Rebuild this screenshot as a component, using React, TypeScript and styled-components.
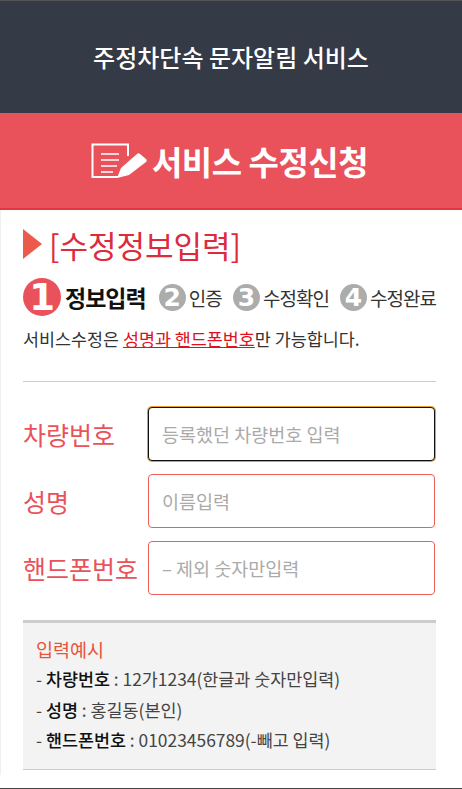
import styled, { createGlobalStyle } from 'styled-components';

const FONT = `"Noto Sans CJK KR", "Noto Sans", sans-serif`;

const STEPS = [
  { number: '2', label: '인증' },
  { number: '3', label: '수정확인' },
  { number: '4', label: '수정완료' },
];

const FIELDS = [
  { label: '차량번호', placeholder: '등록했던 차량번호 입력', focused: true },
  { label: '성명', placeholder: '이름입력', focused: false },
  { label: '핸드폰번호', placeholder: '– 제외 숫자만입력', focused: false },
];

export default function App() {
  return (
    <>
      <GlobalStyle />
      <Page>
        <TopBar>주정차단속 문자알림 서비스</TopBar>
        <Banner>
          <svg width="56" height="36" viewBox="0 0 56 36" aria-hidden="true">
            <path d="M27 34H1.5V1.5H37V13" fill="none" stroke="#fff" strokeWidth="2" />
            <path d="M10 11h18M10 17h18M10 23h16M10 29h12" stroke="#fff" strokeWidth="1.3" />
            <path d="M26 35l4-10L46 11c1-1 2-1 3 0l6 5c1 1 1 2 0 3L38 32z" fill="#fff" />
          </svg>
          <BannerTitle>서비스 수정신청</BannerTitle>
        </Banner>
        <Content>
          <SectionTitle>
            <Arrow />
            <span>[수정정보입력]</span>
          </SectionTitle>
          <Steps>
            <ActiveStep>
              <ActiveNumber>1</ActiveNumber>
              <ActiveLabel>정보입력</ActiveLabel>
            </ActiveStep>
            {STEPS.map((step) => (
              <Step key={step.number}>
                <StepNumber>{step.number}</StepNumber>
                <StepLabel>{step.label}</StepLabel>
              </Step>
            ))}
          </Steps>
          <Notice>
            서비스수정은 <NoticeLink>성명과 핸드폰번호</NoticeLink>만 가능합니다.
          </Notice>
          <Divider />
          <Form>
            {FIELDS.map((field) => (
              <FieldRow key={field.label}>
                <FieldLabel>{field.label}</FieldLabel>
                <FieldInput $focused={field.focused} placeholder={field.placeholder} />
              </FieldRow>
            ))}
          </Form>
          <ExampleBox>
            <ExampleTitle>입력예시</ExampleTitle>
            <ExampleLine>
              - <strong>차량번호</strong> : 12가1234(한글과 숫자만입력)
            </ExampleLine>
            <ExampleLine>
              - <strong>성명</strong> : 홍길동(본인)
            </ExampleLine>
            <ExampleLine>
              - <strong>핸드폰번호</strong> : 01023456789(-빼고 입력)
            </ExampleLine>
          </ExampleBox>
        </Content>
      </Page>
    </>
  );
}

const GlobalStyle = createGlobalStyle`
  html, body {
    margin: 0;
    padding: 0;
    background: #fff;
  }

  * {
    box-sizing: border-box;
  }
`;

const Page = styled.div`
  width: 462px;
  height: 789px;
  overflow: hidden;
  font-family: ${FONT};
  border-top: 1px solid #555;
  border-bottom: 1px solid #444;
  display: flex;
  flex-direction: column;
`;

const TopBar = styled.header`
  height: 112px;
  flex: none;
  padding-bottom: 2px;
  background: #343a46;
  color: #fff;
  font-size: 24px;
  font-weight: 500;
  display: flex;
  align-items: center;
  justify-content: center;
`;

const Banner = styled.div`
  height: 97px;
  flex: none;
  background: #e9525b;
  border-bottom: 2px solid #e0363d;
  color: #fff;
  display: flex;
  align-items: center;
  justify-content: center;
  gap: 5px;
  padding-right: 3px;
`;

const BannerTitle = styled.h1`
  margin: 0;
  font-size: 33px;
  font-weight: 700;
  letter-spacing: -0.5px;
`;

const Content = styled.main`
  height: 565px;
  flex: none;
  padding: 14px 26px 0 22px;
  border-left: 1px solid #f0f0f0;
`;

const SectionTitle = styled.h2`
  margin: 0;
  height: 40px;
  display: flex;
  align-items: center;
  gap: 7px;
  font-size: 31px;
  font-weight: 400;
  color: #dc2b3c;
`;

const Arrow = styled.i`
  width: 0;
  height: 0;
  border-style: solid;
  border-width: 15px 0 15px 19px;
  border-color: transparent transparent transparent #ec5a4c;
`;

const Steps = styled.div`
  margin-top: 13px;
  height: 40px;
  display: flex;
  align-items: center;
  justify-content: space-between;
`;

const ActiveStep = styled.div`
  display: flex;
  align-items: center;
  gap: 4px;
  margin-right: 2px;
`;

const Step = styled.div`
  display: flex;
  align-items: center;
  gap: 3px;
`;

const ActiveNumber = styled.span`
  width: 38px;
  height: 38px;
  border-radius: 50%;
  background: #e9525b;
  color: #fff;
  font-family: "DejaVu Sans", sans-serif;
  font-size: 37px;
  font-weight: 700;
  display: flex;
  align-items: center;
  justify-content: center;
`;

const ActiveLabel = styled.span`
  font-size: 23px;
  font-weight: 700;
  letter-spacing: -1px;
  color: #111;
`;

const StepNumber = styled.span`
  width: 27px;
  height: 27px;
  border-radius: 50%;
  background: #acacac;
  color: #fff;
  font-family: "DejaVu Sans", sans-serif;
  font-size: 25px;
  font-weight: 700;
  display: flex;
  align-items: center;
  justify-content: center;
`;

const StepLabel = styled.span`
  font-size: 19px;
  letter-spacing: -1px;
  color: #333;
`;

const Notice = styled.p`
  margin: 5px 0 0;
  font-size: 17.4px;
  line-height: 34px;
  color: #333;
`;

const NoticeLink = styled.u`
  color: #e01020;
`;

const Divider = styled.hr`
  margin: 25px 0 0;
  border: 0;
  border-top: 1px solid #ccc;
`;

const Form = styled.div`
  margin-top: 25px;
  display: flex;
  flex-direction: column;
  gap: 13px;
`;

const FieldRow = styled.label`
  display: flex;
  align-items: center;
  justify-content: space-between;
  padding-right: 1px;
`;

const FieldLabel = styled.span`
  font-size: 25px;
  font-weight: 400;
  color: #e9525b;
`;

const FieldInput = styled.input<{ $focused: boolean }>`
  width: 287px;
  height: 54px;
  padding: 0 13px;
  border-radius: 4px;
  border: 1px solid #ee5f58;
  font-family: ${FONT};
  font-size: 18.5px;
  background: #fff;
  outline: none;

  ${(p) => p.$focused && 'border-color: #111; box-shadow: 0 0 0 1px #e0a030;'}

  &::placeholder {
    color: #aaa;
  }
`;

const ExampleBox = styled.section`
  margin-top: 25px;
  height: 150px;
  padding: 11px 13px 0;
  background: #f3f3f3;
  border-top: 3px solid #ccc;
  border-bottom: 1px solid #ccc;
`;

const ExampleTitle = styled.div`
  font-size: 18.5px;
  line-height: 30px;
  color: #e8543a;
`;

const ExampleLine = styled.div`
  font-size: 17.4px;
  line-height: 30.5px;
  color: #444;

  strong {
    font-weight: 500;
    color: #111;
  }
`;
